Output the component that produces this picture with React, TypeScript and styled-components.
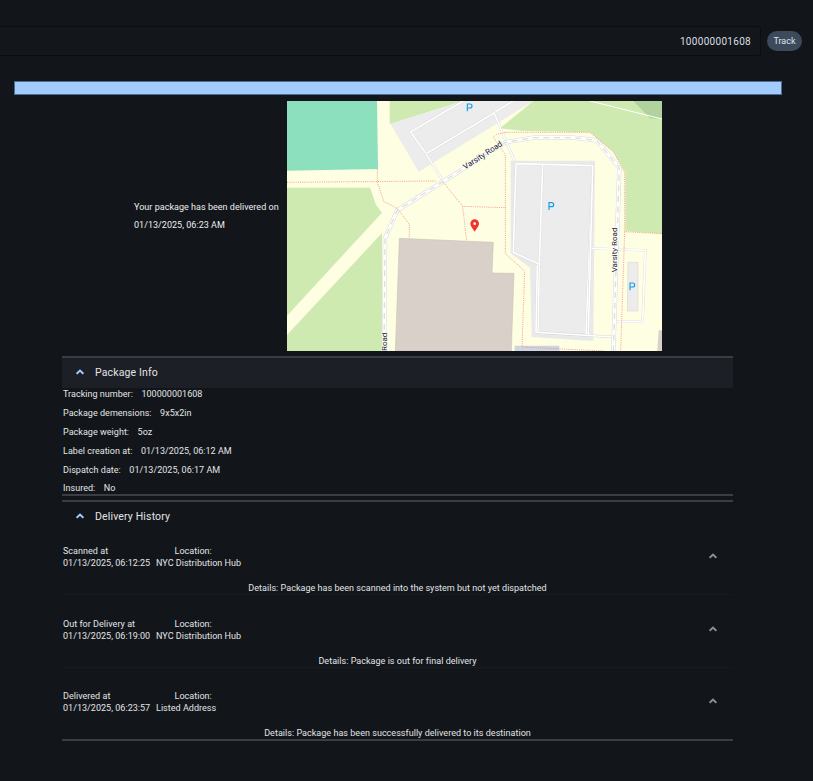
import React from "react";
import styled, { createGlobalStyle } from "styled-components";

const Global = createGlobalStyle`
  html, body { margin: 0; padding: 0; background: #12161b; overflow: hidden; }
  body { font-family: Roboto, "Liberation Sans", sans-serif; color: #e3e4e6; width: 813px; height: 781px; }
`;

const Page = styled.div`
  width: 813px;
  height: 781px;
  padding-top: 26px;
  box-sizing: border-box;
  overflow: hidden;
`;

const SearchRow = styled.div`
  display: flex;
  align-items: center;
  gap: 6px;
  margin-left: -20px;
  width: 822px;
`;

const SearchInput = styled.div`
  flex: 1;
  height: 30px;
  box-sizing: border-box;
  border: 1px solid #0b0d10;
  border-radius: 3px;
  background: #13171c;
  display: flex;
  align-items: center;
  justify-content: flex-end;
  padding-right: 9px;
  font-size: 10px;
  letter-spacing: 0.3px;
  color: #dcdee0;
`;

const TrackButton = styled.button`
  width: 35px;
  height: 20px;
  border: 0;
  padding: 0;
  border-radius: 10px;
  background: #3c4a5c;
  color: #dfe4ea;
  font: 400 9px Roboto, sans-serif;
`;

const ProgressBar = styled.div`
  margin: 25px 0 6px 14px;
  width: 768px;
  height: 14px;
  box-sizing: border-box;
  background: #a3cbfd;
  border: 1px solid #4d6a90;
`;

const Hero = styled.div`
  margin-left: 134px;
  display: flex;
  align-items: center;
  gap: 8px;
  height: 250px;
`;

const HeroText = styled.div`
  width: 145px;
  padding-bottom: 20px;
  white-space: nowrap;
  font-size: 9px;
  line-height: 18px;
  letter-spacing: 0.03px;
  color: #eceded;
`;

const MapFrame = styled.svg`
  display: block;
  width: 375px;
  height: 250px;
  background: #fefee2;
`;

const Sections = styled.div`
  margin: 5px 0 0 62px;
  width: 671px;
`;

const Accordion = styled.section`
  border-top: 2px solid #3a3d41;
`;

const AccordionHead = styled.div<{ $shaded?: boolean }>`
  height: 30px;
  box-sizing: border-box;
  padding: 0 0 2px 14px;
  display: flex;
  align-items: center;
  gap: 11px;
  font-size: 10.5px;
  letter-spacing: 0.15px;
  color: #e3e4e6;
  background: ${(p) => (p.$shaded ? "#1c1f25" : "transparent")};
`;

const InfoList = styled.div`
  height: 108px;
  border-bottom: 2px solid #3a3d41;
  margin-bottom: 4px;
  box-sizing: border-box;
  display: flex;
  flex-direction: column;
  gap: 8px;
  padding-left: 1px;
`;

const InfoRow = styled.div`
  height: 11px;
  display: flex;
  align-items: center;
  gap: 8.5px;
  font-size: 9px;
  letter-spacing: 0.03px;
  color: #e3e4e6;
  &:last-child {
    margin-top: -1px;
  }
`;

const History = styled.div``;

const Entry = styled.div<{ $last?: boolean }>`
  position: relative;
  padding-top: 13px;
  border-bottom: ${(p) => (p.$last ? "2px solid #3a3d41" : "1px solid #171b20")};
  & + & {
    margin-top: 9.5px;
  }
`;

const EntryGrid = styled.div`
  display: grid;
  grid-template-columns: 93px auto;
  padding-left: 1px;
  font-size: 9px;
  line-height: 12px;
  letter-spacing: 0.03px;
  color: #e3e4e6;
`;

const LocationLabel = styled.span`
  padding-left: 18.5px;
`;

const EntryToggle = styled.span`
  position: absolute;
  right: 16px;
  top: 21px;
  display: flex;
`;

const Details = styled.div`
  margin-top: 13px;
  text-align: center;
  font-size: 9px;
  line-height: 12px;
  letter-spacing: 0.03px;
  color: #e3e4e6;
`;

const Chevron = ({ color }: { color: string }) => (
  <svg width="8" height="6" viewBox="0 0 8 6" fill="none">
    <path d="M0.6 4.9 L4 1.6 L7.4 4.9" stroke={color} strokeWidth="2" />
  </svg>
);

const P = ({ x, y }: { x: number; y: number }) => (
  <path d={`M${x} ${y + 22} V${y} H${x + 8} a6 6 0 0 1 0 12 H${x}`} fill="none" stroke="#159ee6" strokeWidth="3.5" />
);

const Road = ({ d, w = 10 }: { d: string; w?: number }) => (
  <>
    <path d={d} fill="none" stroke="#dadada" strokeWidth={w + 3} />
    <path d={d} fill="none" stroke="#fff" strokeWidth={w} />
  </>
);

const Service = ({ d }: { d: string }) => (
  <>
    <path d={d} fill="none" stroke="#d6d6d6" strokeWidth="7" />
    <path d={d} fill="none" stroke="#fff" strokeWidth="5" />
  </>
);

const Track = ({ d }: { d: string }) => (
  <path d={d} fill="none" stroke="#f2857b" strokeWidth="2.4" strokeDasharray="3 3.5" />
);

const MapLabel = ({ x, y, r, children }: { x: number; y: number; r: number; children: string }) => (
  <text x={x} y={y} transform={`rotate(${r} ${x} ${y})`} fontFamily="Roboto, sans-serif" fontSize="24" fill="#222" stroke="#fff" strokeWidth="4" paintOrder="stroke">
    {children}
  </text>
);

const MAIN_ROAD = "M312 768 L315 430 L352 346 L676 142 L760 128 L880 128 L950 136 L1018 218 L1012 400 L1000 768";

const MapDrawing = () => (
  <MapFrame viewBox="21 18 1125 750" aria-label="Map">
    <path d="M21 18 H291 L294 222 L21 227 Z" fill="#8ce0bd" />
    <path d="M329 18 H550 L329 88 Z" fill="#cfeab0" />
    <path d="M660 100 L760 18 H1146 V416 L1036 408 L1036 232 L1000 170 L930 112 L730 108 Z" fill="#cfeab0" />
    <path d="M1060 18 H1146 V72 L1110 70 Z" fill="#b0d29f" />
    <path d="M930 18 L1146 72" stroke="#fff" strokeWidth="3" />
    <path d="M21 278 L270 278 L288 330 L306 353 L21 662 Z" fill="#cfeab0" />
    <path d="M21 720 L306 414 V768 H21 Z" fill="#cfeab0" />
    <path d="M331 86 L548 18 H760 L416 230 Z" fill="#ececec" />
    <Service d="M550 18 L392 110 L438 176 L700 18" />
    <Service d="M438 176 L642 54 L706 204" />
    <Service d="M438 176 L486 254" />
    <path d="M692 197 L945 197 L940 738 L755 726 L750 518 L692 475 Z" fill="#e9e9e9" />
    <path d="M708 206 H784 L778 508 L700 472 Z" fill="#ececec" />
    <path d="M790 208 L938 212 L918 720 L774 712 Z" fill="#ececec" />
    <Service d="M778 508 L700 472 L708 206 L938 212 L918 720 L774 712 L778 508 L788 208" />
    <Service d="M772 510 L768 712 L1000 726" />
    <Service d="M934 460 L1096 466 L1088 680 L1008 680" />
    <Service d="M938 212 L925 720" />
    <path d="M1044 502 H1074 V648 H1042 Z" fill="#ececec" stroke="#d8cfc8" strokeWidth="1.5" />
    <path d="M358 430 L640 442 L636 534 L702 535 L694 768 H346 Z" fill="#d9d0c9" stroke="#c9bdb0" strokeWidth="1.5" />
    <path d="M1136 706 H1146 V768 H1132 Z" fill="#d9d0c9" />
    <path d="M704 752 H838 V768 H704 Z" fill="#d0d3e0" />
    <Road d={MAIN_ROAD} />
    <path d={MAIN_ROAD} fill="none" stroke="#dedede" strokeWidth="4" strokeDasharray="18 14" />
    <Track d="M21 262 L470 258 M292 222 V262 L312 320 L352 340 L388 388 V430 M490 262 L548 334 L678 338 M548 334 L560 438 M676 112 L650 118 L640 126 L676 180 V476 L734 528 L726 756 L970 768 M676 112 L930 112 L1000 170 L1034 232 V410 L1146 416 M1034 410 L1022 768" />
    <MapLabel x={556} y={224} r={-33}>Varsity Road</MapLabel>
    <MapLabel x={1012} y={532} r={-90}>Varsity Road</MapLabel>
    <MapLabel x={320} y={768} r={-90}>Road</MapLabel>
    <P x={562} y={27} />
    <P x={807} y={323} />
    <P x={1050} y={564} />
    <path d="M584 410 C576 398 571 392 571 386 a13 13 0 0 1 26 0 C597 392 592 398 584 410 Z" fill="#f0352b" />
    <circle cx="584" cy="386" r="4" fill="#fff" />
  </MapFrame>
);

const history = [
  { label: "Scanned at", date: "01/13/2025, 06:12:25", place: "NYC Distribution Hub", details: "Package has been scanned into the system but not yet dispatched" },
  { label: "Out for Delivery at", date: "01/13/2025, 06:19:00", place: "NYC Distribution Hub", details: "Package is out for final delivery" },
  { label: "Delivered at", date: "01/13/2025, 06:23:57", place: "Listed Address", details: "Package has been successfully delivered to its destination" },
];

const info = [
  ["Tracking number:", "100000001608"],
  ["Package demensions:", "9x5x2in"],
  ["Package weight:", "5oz"],
  ["Label creation at:", "01/13/2025, 06:12 AM"],
  ["Dispatch date:", "01/13/2025, 06:17 AM"],
  ["Insured:", "No"],
];

export default function App() {
  return (
    <Page>
      <Global />
      <SearchRow>
        <SearchInput>100000001608</SearchInput>
        <TrackButton>Track</TrackButton>
      </SearchRow>
      <ProgressBar />
      <Hero>
        <HeroText>
          Your package has been delivered on
          <br />
          01/13/2025, 06:23 AM
        </HeroText>
        <MapDrawing />
      </Hero>
      <Sections>
        <Accordion>
          <AccordionHead $shaded>
            <Chevron color="#a3cbfd" />
            <span>Package Info</span>
          </AccordionHead>
          <InfoList>
            {info.map(([k, v]) => (
              <InfoRow key={k}>
                <span>{k}</span>
                <span>{v}</span>
              </InfoRow>
            ))}
          </InfoList>
        </Accordion>
        <Accordion>
          <AccordionHead>
            <Chevron color="#a3cbfd" />
            <span>Delivery History</span>
          </AccordionHead>
          <History>
            {history.map((h, i) => (
              <Entry key={h.label} $last={i === history.length - 1}>
                <EntryGrid>
                  <span>{h.label}</span>
                  <LocationLabel>Location:</LocationLabel>
                  <span>{h.date}</span>
                  <span>{h.place}</span>
                </EntryGrid>
                <EntryToggle>
                  <Chevron color="#8b8d90" />
                </EntryToggle>
                <Details>Details: {h.details}</Details>
              </Entry>
            ))}
          </History>
        </Accordion>
      </Sections>
    </Page>
  );
}
